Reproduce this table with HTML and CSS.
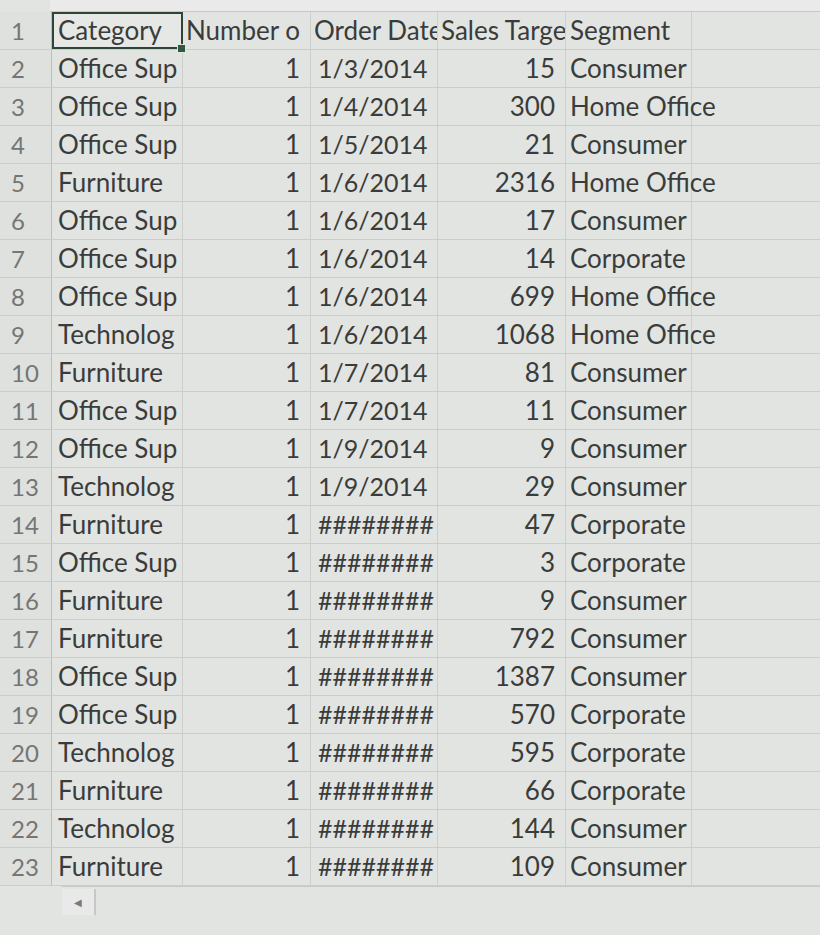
FILE: index.html
```html
<!DOCTYPE html>
<html>
<head>
<meta charset="utf-8">
<link rel="stylesheet" href="styles.css">
</head>
<body>
<div class="topstrip"></div>
<div class="sheet">
  <div class="row">
    <div class="rh">1</div>
    <div class="c cat sel">Category<span class="handle"></span></div>
    <div class="c num hdr">Number o</div>
    <div class="c date hdr">Order Date</div>
    <div class="c sales hdr">Sales Target</div>
    <div class="c seg">Segment</div>
    <div class="c rest"></div>
  </div>
  <div class="row"><div class="rh">2</div><div class="c cat">Office Sup</div><div class="c num r">1</div><div class="c date">1/3/2014</div><div class="c sales r">15</div><div class="c seg">Consumer</div><div class="c rest"></div></div>
  <div class="row"><div class="rh">3</div><div class="c cat">Office Sup</div><div class="c num r">1</div><div class="c date">1/4/2014</div><div class="c sales r">300</div><div class="c seg">Home Office</div><div class="c rest"></div></div>
  <div class="row"><div class="rh">4</div><div class="c cat">Office Sup</div><div class="c num r">1</div><div class="c date">1/5/2014</div><div class="c sales r">21</div><div class="c seg">Consumer</div><div class="c rest"></div></div>
  <div class="row"><div class="rh">5</div><div class="c cat">Furniture</div><div class="c num r">1</div><div class="c date">1/6/2014</div><div class="c sales r">2316</div><div class="c seg">Home Office</div><div class="c rest"></div></div>
  <div class="row"><div class="rh">6</div><div class="c cat">Office Sup</div><div class="c num r">1</div><div class="c date">1/6/2014</div><div class="c sales r">17</div><div class="c seg">Consumer</div><div class="c rest"></div></div>
  <div class="row"><div class="rh">7</div><div class="c cat">Office Sup</div><div class="c num r">1</div><div class="c date">1/6/2014</div><div class="c sales r">14</div><div class="c seg">Corporate</div><div class="c rest"></div></div>
  <div class="row"><div class="rh">8</div><div class="c cat">Office Sup</div><div class="c num r">1</div><div class="c date">1/6/2014</div><div class="c sales r">699</div><div class="c seg">Home Office</div><div class="c rest"></div></div>
  <div class="row"><div class="rh">9</div><div class="c cat">Technolog</div><div class="c num r">1</div><div class="c date">1/6/2014</div><div class="c sales r">1068</div><div class="c seg">Home Office</div><div class="c rest"></div></div>
  <div class="row"><div class="rh">10</div><div class="c cat">Furniture</div><div class="c num r">1</div><div class="c date">1/7/2014</div><div class="c sales r">81</div><div class="c seg">Consumer</div><div class="c rest"></div></div>
  <div class="row"><div class="rh">11</div><div class="c cat">Office Sup</div><div class="c num r">1</div><div class="c date">1/7/2014</div><div class="c sales r">11</div><div class="c seg">Consumer</div><div class="c rest"></div></div>
  <div class="row"><div class="rh">12</div><div class="c cat">Office Sup</div><div class="c num r">1</div><div class="c date">1/9/2014</div><div class="c sales r">9</div><div class="c seg">Consumer</div><div class="c rest"></div></div>
  <div class="row"><div class="rh">13</div><div class="c cat">Technolog</div><div class="c num r">1</div><div class="c date">1/9/2014</div><div class="c sales r">29</div><div class="c seg">Consumer</div><div class="c rest"></div></div>
  <div class="row"><div class="rh">14</div><div class="c cat">Furniture</div><div class="c num r">1</div><div class="c date">########</div><div class="c sales r">47</div><div class="c seg">Corporate</div><div class="c rest"></div></div>
  <div class="row"><div class="rh">15</div><div class="c cat">Office Sup</div><div class="c num r">1</div><div class="c date">########</div><div class="c sales r">3</div><div class="c seg">Corporate</div><div class="c rest"></div></div>
  <div class="row"><div class="rh">16</div><div class="c cat">Furniture</div><div class="c num r">1</div><div class="c date">########</div><div class="c sales r">9</div><div class="c seg">Consumer</div><div class="c rest"></div></div>
  <div class="row"><div class="rh">17</div><div class="c cat">Furniture</div><div class="c num r">1</div><div class="c date">########</div><div class="c sales r">792</div><div class="c seg">Consumer</div><div class="c rest"></div></div>
  <div class="row"><div class="rh">18</div><div class="c cat">Office Sup</div><div class="c num r">1</div><div class="c date">########</div><div class="c sales r">1387</div><div class="c seg">Consumer</div><div class="c rest"></div></div>
  <div class="row"><div class="rh">19</div><div class="c cat">Office Sup</div><div class="c num r">1</div><div class="c date">########</div><div class="c sales r">570</div><div class="c seg">Corporate</div><div class="c rest"></div></div>
  <div class="row"><div class="rh">20</div><div class="c cat">Technolog</div><div class="c num r">1</div><div class="c date">########</div><div class="c sales r">595</div><div class="c seg">Corporate</div><div class="c rest"></div></div>
  <div class="row"><div class="rh">21</div><div class="c cat">Furniture</div><div class="c num r">1</div><div class="c date">########</div><div class="c sales r">66</div><div class="c seg">Corporate</div><div class="c rest"></div></div>
  <div class="row"><div class="rh">22</div><div class="c cat">Technolog</div><div class="c num r">1</div><div class="c date">########</div><div class="c sales r">144</div><div class="c seg">Consumer</div><div class="c rest"></div></div>
  <div class="row"><div class="rh">23</div><div class="c cat">Furniture</div><div class="c num r">1</div><div class="c date">########</div><div class="c sales r">109</div><div class="c seg">Consumer</div><div class="c rest"></div></div>
</div>
<div class="scrollbar">
  <div class="sbtn">&#9664;</div>
</div>
</body>
</html>
```

FILE: styles.css
```css
html, body {
  margin: 0;
  padding: 0;
  background: #e2e4e2;
  width: 820px;
  height: 935px;
  overflow: hidden;
  font-family: Lato, "Open Sans", sans-serif;
  color: #3a3c3b;
}
.topstrip {
  height: 11px;
  background: #e9eae9;
  border-bottom: 1px solid #c6c8c6;
  margin-left: 50px;
}
.sheet {
  display: flex;
  flex-direction: column;
}
.row {
  display: grid;
  grid-template-columns: 52px 131px 128px 127px 128px 126px 1fr;
  height: 38px;
  border-bottom: 1px solid #cbcdcb;
  box-sizing: border-box;
}
.rh {
  font-size: 24px;
  color: #737674;
  padding-left: 11px;
  line-height: 37px;
  background: #dfe1df;
  border-right: 1px solid #bcbebc;
}
.c {
  position: relative;
  font-size: 26px;
  line-height: 37px;
  padding: 0 4px 0 6px;
  border-right: 1px solid #cdcfcd;
  white-space: nowrap;
  overflow: hidden;
}
.c.r { text-align: right; padding-right: 10px; }
.c.rest { border-right: none; }
.c.seg {
  overflow: visible;
  z-index: 1;
  padding-left: 4px;
}
.c.sel {
  overflow: visible;
  outline: 2px solid #2e4437;
  outline-offset: -2px;
  background: #e6e8e6;
  z-index: 2;
}
.handle {
  position: absolute;
  right: -4px;
  bottom: -4px;
  width: 7px;
  height: 7px;
  background: #2b5a3e;
  border: 1px solid #e3e5e3;
}
.date { font-size: 25px; padding-left: 7px; }
.c.hdr { padding-left: 3px; padding-right: 0; font-size: 26px; }
.scrollbar {
  height: 32px;
  margin-left: 62px;
  border-top: 1px solid #c8cac8;
  display: flex;
  align-items: flex-start;
}
.sbtn {
  width: 32px;
  height: 26px;
  margin-top: 2px;
  border-right: 2px solid #c6c8c6;
  background: #e8e9e8;
  font-size: 10px;
  color: #7a7c7b;
  display: flex;
  align-items: center;
  justify-content: center;
}
```
